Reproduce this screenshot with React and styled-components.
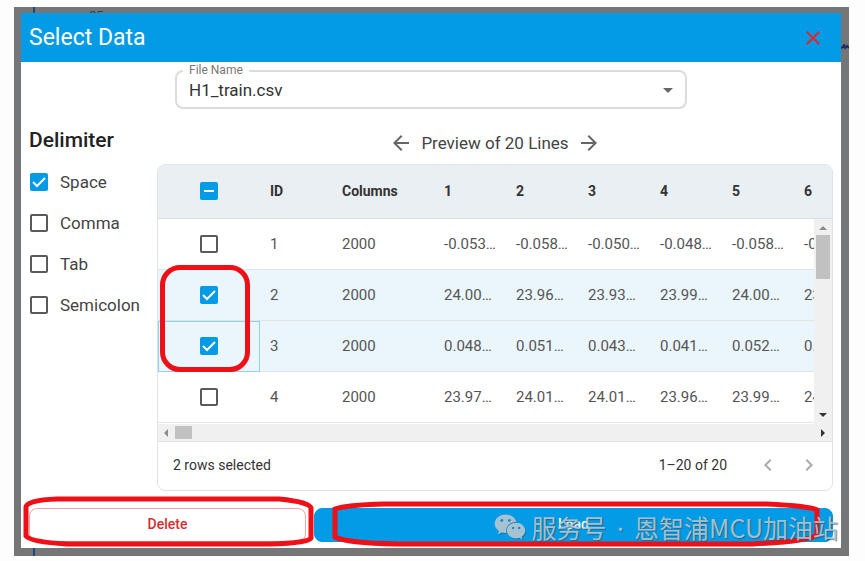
import React, { useEffect, useRef, useState } from 'react'
import styled, { createGlobalStyle, css } from 'styled-components';
import { MdArrowBack, MdArrowForward, MdArrowDropDown, MdChevronLeft, MdChevronRight, MdClose } from 'react-icons/md';
import { FaWeixin } from 'react-icons/fa';

const GlobalStyle = createGlobalStyle`
  * {
    box-sizing: border-box;
  }
  body {
    margin: 0;
    background: #fdfdfd;
    font-family: Roboto, "Liberation Sans", sans-serif;
    color: #333;
  }
  button, select, input {
    font: inherit;
    margin: 0;
  }
`;

const Page = styled.div`
  padding: 7px 16px 4px 14px;
`;

const Backdrop = styled.div`
  position: relative;
  overflow: hidden;
  padding: 6px 8px 8px 7px;
  background: #757678;
`;

/* pieces of the chart that stay visible behind the dialog */
const AxisLine = styled.span`
  position: absolute;
  left: 19px;
  top: 0;
  bottom: 0;
  width: 2px;
  background: #1c4a80;
`;

const AxisLabel = styled.span`
  position: absolute;
  left: 75px;
  top: 1px;
  font-size: 13px;
  line-height: 15px;
  color: #3c3c3e;
`;

const ChartTail = styled.svg`
  position: absolute;
  right: 0;
  top: 37px;
  width: 8px;
  height: 6px;
`;

const Dialog = styled.section`
  position: relative;
  background: #fff;
`;

const Header = styled.header`
  display: flex;
  align-items: center;
  justify-content: space-between;
  height: 49px;
  padding: 0 16px 0 8px;
  background: #039be5;
  color: #fff;
`;

const Title = styled.h1`
  margin: 0;
  font-size: 23px;
  font-weight: 400;
`;

const IconButton = styled.button`
  display: flex;
  align-items: center;
  justify-content: center;
  width: 24px;
  height: 24px;
  padding: 0;
  border: 0;
  background: none;
  color: ${props => props.$color || '#666'};
  cursor: pointer;
`;

const Content = styled.div`
  padding: 8px 8px 6px;
`;

const FileField = styled.div`
  position: relative;
  max-width: 512px;
  margin: 0 auto 19px;
`;

const FileLabel = styled.label`
  position: absolute;
  left: 8px;
  top: -8px;
  padding: 0 6px;
  background: #fff;
  font-size: 12px;
  line-height: 16px;
  color: #777;
`;

const FileSelect = styled.select`
  appearance: none;
  display: block;
  width: 100%;
  height: 39px;
  padding: 0 40px 0 12px;
  border: 2px solid #dcdcdc;
  border-radius: 8px;
  background: #fff;
  font-size: 17px;
  color: #333;
`;

const SelectArrow = styled(MdArrowDropDown)`
  position: absolute;
  right: 7px;
  top: 8px;
  color: #666;
  pointer-events: none;
`;

const Columns = styled.div`
  display: grid;
  grid-template-columns: 128px minmax(0, 1fr);
`;

const Delimiters = styled.fieldset`
  margin: 0;
  padding: 0;
  border: 0;
  min-width: 0;
`;

const DelimiterTitle = styled.legend`
  padding: 0;
  margin-bottom: 10px;
  font-size: 21px;
  font-weight: 500;
  line-height: 24px;
  color: #222;
`;

const Option = styled.label`
  display: flex;
  align-items: center;
  gap: 12px;
  height: 41px;
  padding: 0 0 2px 1px;
  font-size: 17px;
  color: #444;
`;

const tick = `url("data:image/svg+xml,%3Csvg xmlns='http://www.w3.org/2000/svg' viewBox='0 0 18 18'%3E%3Cpath d='M3 9l4 4 8-8' fill='none' stroke='white' stroke-width='2'/%3E%3C/svg%3E")`;
const dash = `url("data:image/svg+xml,%3Csvg xmlns='http://www.w3.org/2000/svg' viewBox='0 0 18 18'%3E%3Cpath d='M4 9h10' stroke='white' stroke-width='2'/%3E%3C/svg%3E")`;

const Box = styled.input`
  appearance: none;
  display: block;
  flex: none;
  width: 18px;
  height: 18px;
  border: 2px solid #5a5a5a;
  border-radius: 2px;
  background: #fff;

  &:checked, &:indeterminate {
    border: 0;
    background: #039be5 ${tick} center / 18px;
  }
  &:indeterminate {
    background-image: ${dash};
  }
`;

const Preview = styled.div`
  display: flex;
  align-items: center;
  justify-content: center;
  gap: 8px;
  height: 24px;
  margin: 3px 0 9px;
  font-size: 17px;
  color: #444;
`;

const Panel = styled.div`
  position: relative;
  border: 1px solid #e0e3e3;
  border-radius: 8px;
`;

const TableArea = styled.div`
  position: relative;
  overflow: hidden;
  padding-bottom: 1px;
  border-radius: 7px 7px 0 0;
`;

const Table = styled.table`
  width: 708px;
  min-width: 100%;
  table-layout: fixed;
  border-collapse: separate;
  border-spacing: 0;
  font-size: 15px;
`;

const HeadCell = styled.th`
  width: ${props => (props.$wide ? 102 : 72)}px;
  height: 54px;
  padding: 0 10px 2px;
  background: #e9eff2;
  border-bottom: 1px solid #dcdfdf;
  text-align: left;
  font-size: 14px;
  font-weight: 700;
  color: #333;
`;

const Row = styled.tr`
  background: ${props => (props.$selected ? '#eaf6fc' : '#fff')};
`;

const Cell = styled.td`
  height: 51px;
  padding: 0 8px 0 10px;
  border-bottom: 1px solid #e2e4e4;
  overflow: hidden;
  text-overflow: ellipsis;
  white-space: nowrap;
  color: #555;
`;

const CheckCell = styled(Cell)`
  padding: 0 10px;
  ${props => props.$focused && css`
    outline: 1px solid #8fd2f0;
    outline-offset: -1px;
  `}
`;

const BoxHolder = styled.div`
  display: flex;
  justify-content: center;
`;

const VerticalBar = styled.div`
  position: absolute;
  top: 54px;
  right: 0;
  bottom: 0;
  width: 18px;
  display: flex;
  flex-direction: column;
  align-items: center;
  padding: 5px 0;
  background: #f0f0f0;
`;

const HorizontalBar = styled.div`
  display: flex;
  align-items: center;
  height: 17px;
  padding: 0 5px;
  background: #f0f0f0;
`;

const Thumb = styled.span`
  width: ${props => props.$width}px;
  height: ${props => props.$height}px;
  margin: ${props => (props.$vertical ? '3px 0 auto' : '0 auto 0 4px')};
  background: #c1c1c1;
`;

const Arrow = styled.svg`
  display: block;
  width: 8px;
  height: 8px;
  fill: ${props => (props.$dim ? '#8c8c8c' : '#333')};
`;

const Footer = styled.footer`
  display: flex;
  align-items: center;
  height: 49px;
  padding: 0 11px 2px 15px;
  border-top: 1px solid #e0e3e3;
  font-size: 14px;
  color: #333;
`;

const Range = styled.span`
  margin: 0 29px 0 auto;
`;

const Pager = styled.div`
  display: flex;
  gap: 17px;
`;

const Actions = styled.div`
  display: grid;
  grid-template-columns: 277fr 519fr;
  gap: 8px;
  margin-top: 17px;
`;

const Action = styled.div`
  position: relative;
`;

const ActionButton = styled.button`
  display: block;
  width: 100%;
  height: 34px;
  padding: 0 0 3px;
  border: 1px solid ${props => (props.$danger ? '#f2a3a3' : '#039be5')};
  border-radius: 8px;
  background: ${props => (props.$danger ? '#fff' : '#039be5')};
  font-size: 14px;
  font-weight: 500;
  color: ${props => (props.$danger ? '#d32f2f' : '#fff')};
  cursor: pointer;
`;

/* hand-drawn highlights lying over the dialog */
const Ring = styled.svg`
  position: absolute;
  fill: none;
  stroke: #ee1016;
  pointer-events: none;
`;

const RowsRing = styled.div`
  position: absolute;
  left: 2px;
  top: 100px;
  width: 90px;
  height: 107px;
  border: 5px solid #ee1016;
  border-radius: 20px;
  pointer-events: none;
`;

const DeleteRing = styled(Ring)`
  left: -6px;
  top: -12px;
  width: calc(100% + 14px);
  height: 52px;
`;

const LoadRing = styled(Ring)`
  left: 18px;
  top: -7px;
  width: calc(100% - 31px);
  height: 46px;
`;

const Watermark = styled.div`
  position: absolute;
  right: -5px;
  top: 0;
  display: flex;
  align-items: center;
  gap: 5px;
  height: 38px;
  font-family: "Noto Sans CJK SC", sans-serif;
  font-size: 25px;
  font-weight: 400;
  line-height: 38px;
  white-space: nowrap;
  color: rgba(180, 202, 214, 0.9);
  text-shadow: 1px 1px 1px rgba(60, 80, 95, 0.7);
  pointer-events: none;

  svg {
    filter: drop-shadow(1px 1px 0 rgba(60, 80, 95, 0.5));
  }
`;

const Dot = styled.span`
  padding: 0 4px;
  font-family: "Noto Sans", sans-serif;
`;

const columns = ['ID', 'Columns', '1', '2', '3', '4', '5', '6'];

const lines = [
    ['1', '2000', '-0.05312', '-0.05847', '-0.05021', '-0.04833', '-0.05810', '-0.05127'],
    ['2', '2000', '24.00152', '23.96218', '23.93401', '23.99170', '24.00385', '23.97264'],
    ['3', '2000', '0.048213', '0.051377', '0.043902', '0.041265', '0.052718', '0.047126'],
    ['4', '2000', '23.97148', '24.01263', '24.01839', '23.96402', '23.99517', '24.00281'],
];

const delimiters = ['Space', 'Comma', 'Tab', 'Semicolon'];

const App = () => {
    const [delimiter, setDelimiter] = useState('Space');
    const [selected, setSelected] = useState(['2', '3']);
    const allBox = useRef(null);

    useEffect(() => {
        allBox.current.indeterminate = selected.length > 0 && selected.length < lines.length;
    }, [selected]);

    const toggle = (id) => {
        setSelected(selected.includes(id) ? selected.filter(s => s !== id) : [...selected, id]);
    };

    const toggleAll = () => {
        setSelected(selected.length === lines.length ? [] : lines.map(line => line[0]));
    };

    return (
        <Page>
            <GlobalStyle/>
            <Backdrop>
                <AxisLine/>
                <AxisLabel>25</AxisLabel>
                <ChartTail viewBox="0 0 8 6">
                    <path d="M0 4l2-1 1-2 1 3 2-2 2 2" fill="none" stroke="#1f2a66" strokeWidth="2"/>
                </ChartTail>
                <Dialog>
                    <Header>
                        <Title>Select Data</Title>
                        <IconButton $color="#e3262b" aria-label="Close"><MdClose size={24}/></IconButton>
                    </Header>
                    <Content>
                        <FileField>
                            <FileSelect id="file-name">
                                <option>H1_train.csv</option>
                            </FileSelect>
                            <FileLabel htmlFor="file-name">File Name</FileLabel>
                            <SelectArrow size={24}/>
                        </FileField>
                        <Columns>
                            <Delimiters>
                                <DelimiterTitle>Delimiter</DelimiterTitle>
                                {delimiters.map(name => (
                                    <Option key={name}>
                                        <Box type="checkbox" checked={delimiter === name} onChange={() => setDelimiter(name)}/>
                                        {name}
                                    </Option>
                                ))}
                            </Delimiters>
                            <div>
                                <Preview>
                                    <IconButton aria-label="Previous lines"><MdArrowBack size={24}/></IconButton>
                                    <span>Preview of 20 Lines</span>
                                    <IconButton aria-label="Next lines"><MdArrowForward size={24}/></IconButton>
                                </Preview>
                                <Panel>
                                    <TableArea>
                                        <Table>
                                            <thead>
                                                <tr>
                                                    <HeadCell $wide>
                                                        <BoxHolder>
                                                            <Box
                                                                ref={allBox}
                                                                type="checkbox"
                                                                aria-label="Select all rows"
                                                                checked={selected.length === lines.length}
                                                                onChange={toggleAll}
                                                            />
                                                        </BoxHolder>
                                                    </HeadCell>
                                                    {columns.map(name => (
                                                        <HeadCell key={name} $wide={name === 'Columns'}>{name}</HeadCell>
                                                    ))}
                                                </tr>
                                            </thead>
                                            <tbody>
                                                {lines.map(line => (
                                                    <Row key={line[0]} $selected={selected.includes(line[0])}>
                                                        <CheckCell $focused={line[0] === '3'}>
                                                            <BoxHolder>
                                                                <Box
                                                                    type="checkbox"
                                                                    aria-label={`Select row ${line[0]}`}
                                                                    checked={selected.includes(line[0])}
                                                                    onChange={() => toggle(line[0])}
                                                                />
                                                            </BoxHolder>
                                                        </CheckCell>
                                                        {line.map((value, i) => <Cell key={i}>{value}</Cell>)}
                                                    </Row>
                                                ))}
                                            </tbody>
                                        </Table>
                                        <VerticalBar>
                                            <Arrow $dim viewBox="0 0 8 8"><path d="M0 6l4-4 4 4z"/></Arrow>
                                            <Thumb $vertical $width={14} $height={44}/>
                                            <Arrow viewBox="0 0 8 8"><path d="M0 2l4 4 4-4z"/></Arrow>
                                        </VerticalBar>
                                    </TableArea>
                                    <HorizontalBar>
                                        <Arrow $dim viewBox="0 0 8 8"><path d="M5 0L1 4l4 4z"/></Arrow>
                                        <Thumb $width={17} $height={13}/>
                                        <Arrow viewBox="0 0 8 8"><path d="M2 0l4 4-4 4z"/></Arrow>
                                    </HorizontalBar>
                                    <Footer>
                                        <span>{selected.length} rows selected</span>
                                        <Range>1–20 of 20</Range>
                                        <Pager>
                                            <IconButton $color="#aaa" aria-label="Previous page"><MdChevronLeft size={24}/></IconButton>
                                            <IconButton $color="#aaa" aria-label="Next page"><MdChevronRight size={24}/></IconButton>
                                        </Pager>
                                    </Footer>
                                    <RowsRing/>
                                </Panel>
                            </div>
                        </Columns>
                        <Actions>
                            <Action>
                                <ActionButton $danger>Delete</ActionButton>
                                <DeleteRing viewBox="0 0 291 52" preserveAspectRatio="none">
                                    <path d="M3 11Q4 4 34 3H256Q287 6 288 12V42Q286 47 246 48H44Q8 46 3 40Z" strokeWidth="5"/>
                                </DeleteRing>
                            </Action>
                            <Action>
                                <ActionButton>Load</ActionButton>
                                <LoadRing viewBox="0 0 488 46" preserveAspectRatio="none">
                                    <path d="M3 8Q14 4 52 3H434Q478 5 485 9V34Q478 40 421 43H65Q14 42 3 36Z" strokeWidth="5"/>
                                </LoadRing>
                                <Watermark>
                                    <FaWeixin size={32}/>
                                    <span>服务号<Dot> · </Dot>恩智浦MCU加油站</span>
                                </Watermark>
                            </Action>
                        </Actions>
                    </Content>
                </Dialog>
            </Backdrop>
        </Page>
    )
}

export default App
